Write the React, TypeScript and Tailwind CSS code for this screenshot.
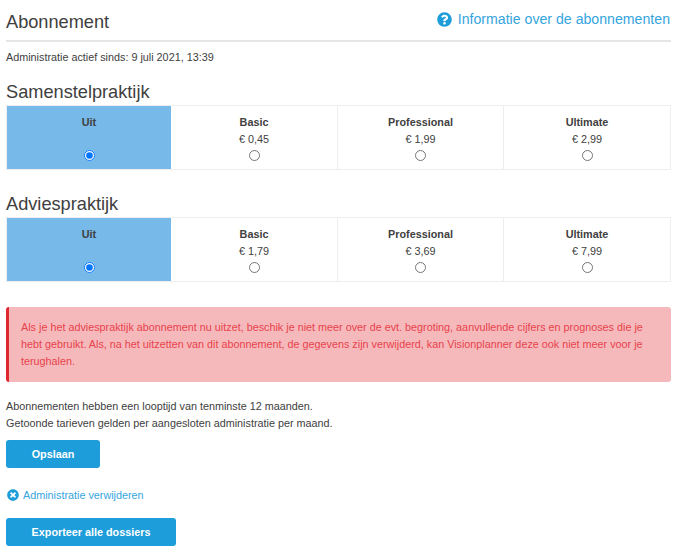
import { FaQuestionCircle, FaTimesCircle } from "react-icons/fa";

type Plan = { name: string; price?: string };

const samenstel: Plan[] = [
  { name: "Uit" },
  { name: "Basic", price: "€ 0,45" },
  { name: "Professional", price: "€ 1,99" },
  { name: "Ultimate", price: "€ 2,99" },
];

const advies: Plan[] = [
  { name: "Uit" },
  { name: "Basic", price: "€ 1,79" },
  { name: "Professional", price: "€ 3,69" },
  { name: "Ultimate", price: "€ 7,99" },
];

function PlanTable({ group, plans }: { group: string; plans: Plan[] }) {
  return (
    <div className="grid h-[65px] grid-cols-[164px_167px_166px_166px] border border-[#eeeeee]">
      {plans.map((plan) => {
        const active = !plan.price;
        return (
          <label
            key={plan.name}
            className={[
              "flex flex-col items-center pt-[8px]",
              active ? "bg-[#77b9e8]" : "border-r border-[#eeeeee] bg-white last:border-r-0",
            ].join(" ")}
          >
            <span className="h-[16px] text-[10.8px] leading-[16px] font-bold">{plan.name}</span>
            <span className="mt-[1px] h-[16px] leading-[16px]">{plan.price}</span>
            <input
              type="radio"
              name={group}
              defaultChecked={active}
              className="mt-[3px] h-[11px] w-[11px]"
            />
          </label>
        );
      })}
    </div>
  );
}

export default function App() {
  return (
    <div className="h-[560px] w-[688px] bg-white px-[6px] font-['Liberation_Sans',Arial,sans-serif] text-[10.8px] text-[#404040]">
      <div className="w-[665px]">
        <div className="flex h-[42px] items-center justify-between border-b-2 border-[#e5e5e5] pt-[3px]">
          <h1 className="text-[18.2px] leading-[24px]">Abonnement</h1>
          <a className="mr-[1px] mb-[3px] flex items-center gap-[6px] text-[14.15px] text-[#35a5de]">
            <FaQuestionCircle className="h-[15px] w-[15px] text-[#1d9dd9]" />
            Informatie over de abonnementen
          </a>
        </div>

        <p className="mt-[7px] leading-[16px]">Administratie actief sinds: 9 juli 2021, 13:39</p>

        <h2 className="mt-[15px] mb-[1px] text-[18.2px] leading-[24px]">Samenstelpraktijk</h2>
        <PlanTable group="samenstel" plans={samenstel} />

        <h2 className="mt-[22px] mb-[1px] text-[18.2px] leading-[24px]">Adviespraktijk</h2>
        <PlanTable group="advies" plans={advies} />

        <div className="mt-[25px] h-[75px] rounded-[3px] border-l-[3px] border-[#e0262f] bg-[#f5b9bc] px-[12px] pt-[12px] leading-[17px] text-[#e8424b]">
          Als je het adviespraktijk abonnement nu uitzet, beschik je niet meer over de evt. begroting, aanvullende
          cijfers en prognoses die je hebt gebruikt. Als, na het uitzetten van dit abonnement, de gegevens zijn
          verwijderd, kan Visionplanner deze ook niet meer voor je terughalen.
        </div>

        <p className="mt-[16px] leading-[17px]">
          Abonnementen hebben een looptijd van tenminste 12 maanden.
          <br />
          Getoonde tarieven gelden per aangesloten administratie per maand.
        </p>

        <button
          type="button"
          className="mt-[8px] block h-[28px] w-[94px] rounded-[3px] bg-[#1d9dd9] text-[10.8px] font-bold text-white"
        >
          Opslaan
        </button>

        <a className="mt-[19px] flex h-[16px] items-center gap-[4px] text-[#35a5de]">
          <FaTimesCircle className="ml-[1px] h-[12px] w-[12px] text-[#1d9dd9]" />
          Administratie verwijderen
        </a>

        <button
          type="button"
          className="mt-[15px] block h-[28px] w-[170px] rounded-[3px] bg-[#1d9dd9] text-[10.8px] font-bold text-white"
        >
          Exporteer alle dossiers
        </button>
      </div>
    </div>
  );
}
